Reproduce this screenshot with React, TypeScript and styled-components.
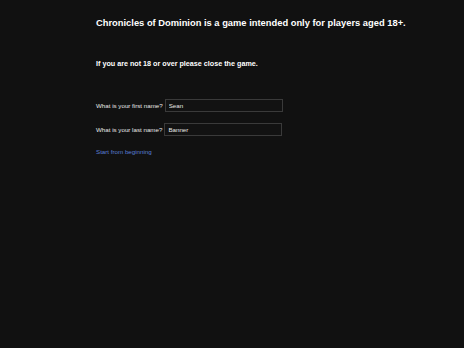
import React from "react";
import styled, { createGlobalStyle } from "styled-components";

const Global = createGlobalStyle`
  html, body { margin: 0; padding: 0; background: #111111; }
  body { font-family: "Liberation Sans", Arial, sans-serif; color: #ffffff; }
`;

const Page = styled.div`
  width: 464px;
  height: 348px;
  box-sizing: border-box;
  padding: 16px 0 0 96px;
  background: #111111;
  display: flex;
  flex-direction: column;
  align-items: flex-start;
`;

const Title = styled.h1`
  margin: 0;
  font-size: 9.35px;
  font-weight: bold;
  line-height: 15px;
  color: #ffffff;
  white-space: nowrap;
`;

const Warning = styled.h2`
  margin: 28px 0 0 0;
  font-size: 7.2px;
  font-weight: bold;
  line-height: 10px;
  color: #ffffff;
`;

const Form = styled.div`
  margin-top: 30px;
  display: flex;
  flex-direction: column;
  gap: 11px;
`;

const Row = styled.label`
  display: flex;
  align-items: center;
  gap: 2px;
  font-size: 6.2px;
  color: #e8e8e8;
`;

const Input = styled.input`
  width: 118px;
  height: 13px;
  box-sizing: border-box;
  background: #121212;
  border: 1px solid #3a3a3a;
  color: #e8e8e8;
  font-family: "Liberation Sans", Arial, sans-serif;
  font-size: 6.2px;
  padding: 0 3px;
  outline: none;
`;

const Link = styled.a`
  margin-top: 12px;
  font-size: 6.2px;
  color: #5a7fd4;
  text-decoration: none;
  cursor: pointer;
`;

export default function App() {
  return (
    <>
      <Global />
      <Page>
        <Title>Chronicles of Dominion is a game intended only for players aged 18+.</Title>
        <Warning>If you are not 18 or over please close the game.</Warning>
        <Form>
          <Row>
            What is your first name?
            <Input defaultValue="Sean" />
          </Row>
          <Row>
            What is your last name?
            <Input defaultValue="Banner" />
          </Row>
        </Form>
        <Link>Start from beginning</Link>
      </Page>
    </>
  );
}
